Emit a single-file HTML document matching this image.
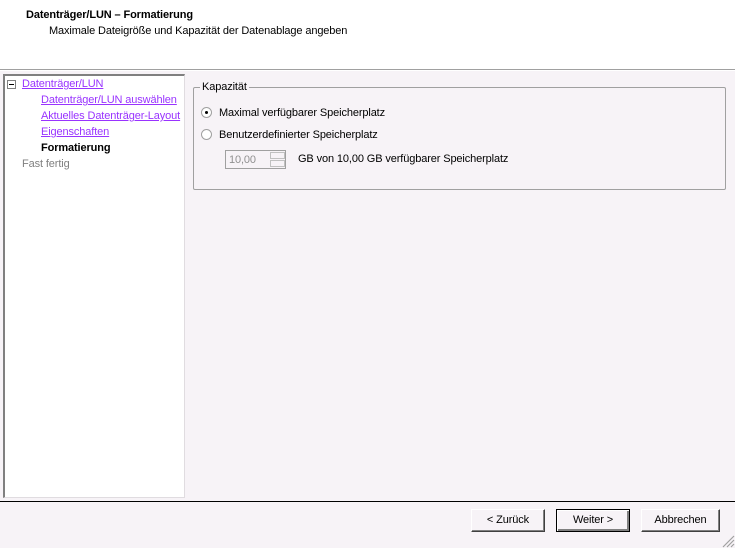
<!DOCTYPE html>
<html><head><style>
body{margin:0;width:735px;height:548px;background:#f7f3f7;font-family:"Liberation Sans",sans-serif;font-size:11px;letter-spacing:-0.12px;position:relative;overflow:hidden;color:#000}
.a{position:absolute;white-space:nowrap}
.hdr{position:absolute;left:0;top:0;width:735px;height:69px;background:#fff;border-bottom:1px solid #a0a0a0}
.hdr2{position:absolute;left:0;top:70px;width:735px;height:1px;background:#fff}
.tree{position:absolute;left:3px;top:74px;width:179px;height:421px;background:#fff;border-top:2px solid #808080;border-left:2px solid #808080;border-right:1px solid #e0dce0;border-bottom:1px solid #e0dce0}
.lnk{color:#9933ff;text-decoration:underline}
.grp{position:absolute;left:193px;top:87px;width:531px;height:101px;border:1px solid #a0a0a0;border-radius:2px}
.rad{position:absolute;width:11px;height:11px;border-radius:50%;background:#fff;border:1px solid #a0a0a0;box-sizing:border-box}
.btn{position:absolute;top:509px;height:23px;width:74px;box-sizing:border-box;background:#f7f3f7;border:1px solid #fff;border-right-color:#404040;border-bottom-color:#404040;box-shadow:inset -1px -1px 0 #808080;text-align:center;line-height:21px}
</style></head><body>
<div class="hdr"></div><div class="hdr2"></div>
<div class="a" style="left:26px;top:9px;font-weight:bold">Datenträger/LUN – Formatierung</div>
<div class="a" style="left:49px;top:25px">Maximale Dateigröße und Kapazität der Datenablage angeben</div>
<div class="tree"></div>
<div class="a" style="left:7px;top:80px;width:7px;height:7px;border:1px solid #808080;background:#fff"></div>
<div class="a" style="left:9px;top:84px;width:5px;height:1px;background:#000"></div>
<div class="a lnk" style="left:22px;top:78px">Datenträger/LUN</div>
<div class="a lnk" style="left:41px;top:94px">Datenträger/LUN auswählen</div>
<div class="a lnk" style="left:41px;top:110px;width:142px;overflow:hidden">Aktuelles Datenträger-Layout</div>
<div class="a lnk" style="left:41px;top:126px">Eigenschaften</div>
<div class="a" style="left:41px;top:142px;font-weight:bold">Formatierung</div>
<div class="a" style="left:22px;top:158px;color:#808080">Fast fertig</div>
<div class="grp"></div>
<div class="a" style="left:200px;top:81px;background:#f7f3f7;padding:0 2px">Kapazität</div>
<div class="rad" style="left:201px;top:107px"><div style="position:absolute;left:3px;top:3px;width:3px;height:3px;background:#000;border-radius:50%"></div></div>
<div class="a" style="left:219px;top:107px">Maximal verfügbarer Speicherplatz</div>
<div class="rad" style="left:201px;top:129px"></div>
<div class="a" style="left:219px;top:129px">Benutzerdefinierter Speicherplatz</div>
<div class="a" style="left:225px;top:150px;width:61px;height:19px;box-sizing:border-box;border:1px solid #a0a0a0;background:#f7f3f7;color:#909090;padding:3px 0 0 3px">10,00</div>
<div class="a" style="left:270px;top:152px;width:15px;height:7px;border:1px solid #c0c0c0;box-sizing:border-box"></div>
<div class="a" style="left:270px;top:160px;width:15px;height:7px;border:1px solid #c0c0c0;box-sizing:border-box"></div>
<div class="a" style="left:298px;top:153px">GB von 10,00 GB verfügbarer Speicherplatz</div>
<div class="a" style="left:0;top:501px;width:735px;height:1px;background:#000"></div>
<div class="btn" style="left:471px">&lt; Zurück</div>
<div class="btn" style="left:556px;border:1px solid #000;box-shadow:inset 1px 1px 0 #fff,inset -2px -2px 0 #808080">Weiter &gt;</div>
<div class="btn" style="left:641px;width:79px">Abbrechen</div>
<svg class="a" style="left:722px;top:535px" width="13" height="13"><path d="M12 1L1 12M12 5L5 12M12 9L9 12" stroke="#a0a0a0" stroke-width="1.2"/></svg>
</body></html>
